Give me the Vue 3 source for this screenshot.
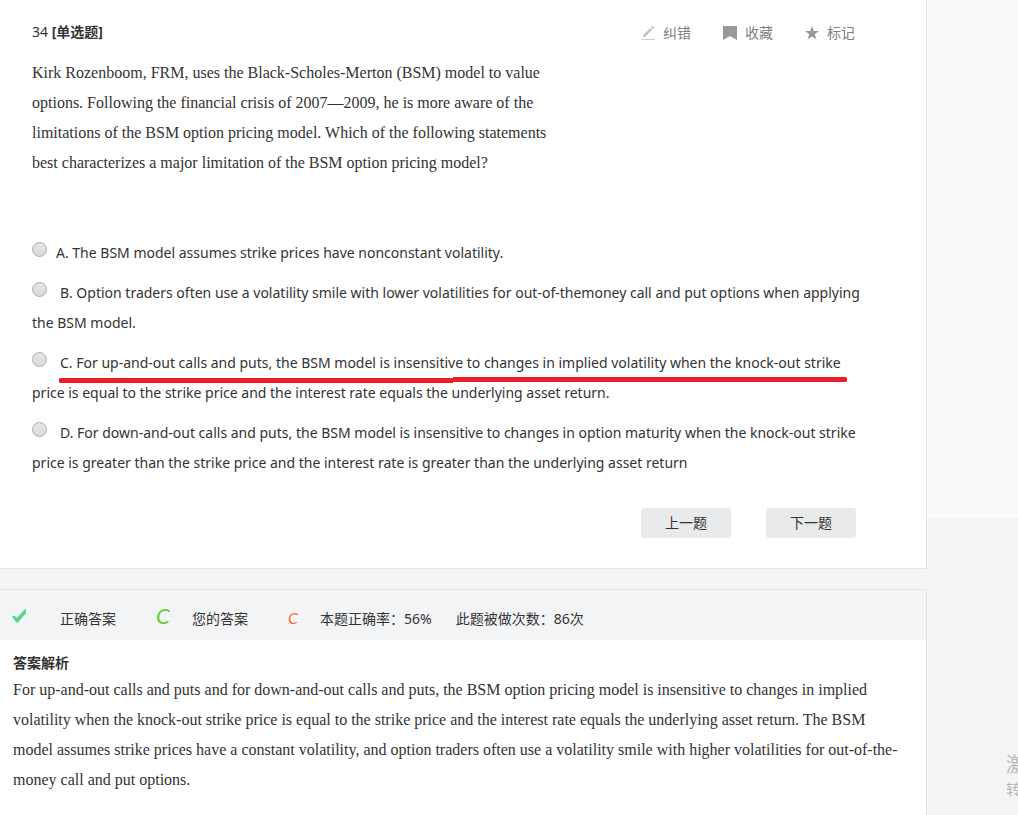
<script setup>
import { ref } from 'vue'

const picked = ref('')
const options = [
  { key: 'A', lines: ['The BSM model assumes strike prices have nonconstant volatility.'] },
  {
    key: 'B',
    lines: [
      'Option traders often use a volatility smile with lower volatilities for out-of-themoney call and put options when applying',
      'the BSM model.',
    ],
  },
  {
    key: 'C',
    marked: true,
    lines: [
      'For up-and-out calls and puts, the BSM model is insensitive to changes in implied volatility when the knock-out strike',
      'price is equal to the strike price and the interest rate equals the underlying asset return.',
    ],
  },
  {
    key: 'D',
    lines: [
      'For down-and-out calls and puts, the BSM model is insensitive to changes in option maturity when the knock-out strike',
      'price is greater than the strike price and the interest rate is greater than the underlying asset return',
    ],
  },
]
const questionLines = [
  'Kirk Rozenboom, FRM, uses the Black-Scholes-Merton (BSM) model to value',
  'options. Following the financial crisis of 2007—2009, he is more aware of the',
  'limitations of the BSM option pricing model. Which of the following statements',
  'best characterizes a major limitation of the BSM option pricing model?',
]
const analysisLines = [
  'For up-and-out calls and puts and for down-and-out calls and puts, the BSM option pricing model is insensitive to changes in implied',
  'volatility when the knock-out strike price is equal to the strike price and the interest rate equals the underlying asset return. The BSM',
  'model assumes strike prices have a constant volatility, and option traders often use a volatility smile with higher volatilities for out-of-the-',
  'money call and put options.',
]
</script>

<template>
  <div class="page">
    <main class="main">
      <section class="panel question">
        <header class="head">
          <h1 class="title">34 <b>[单选题]</b></h1>
          <div class="actions">
            <button type="button" class="action">
              <svg width="14" height="14" viewBox="0 0 14 14" aria-hidden="true">
                <path d="M1.6 11.6 2.6 8.8 9.3 2 11.2 3.8 4.5 10.5z M10 1.4 11.4 0 13.4 1.8 11.9 3.2z" fill="#c0c0c0" />
                <path d="M0 13.5h14" stroke="#cfcfcf" />
              </svg>
              纠错
            </button>
            <button type="button" class="action">
              <svg width="14" height="14" viewBox="0 0 14 14" aria-hidden="true">
                <path d="M0 0h14v14l-7-4-7 4z" fill="#999" />
              </svg>
              收藏
            </button>
            <button type="button" class="action">
              <svg width="14" height="14" viewBox="0 0 14 14" aria-hidden="true">
                <path d="M7 0 8.7 5H14L9.8 8.3 11.4 13.5 7 10.4 2.6 13.5 4.2 8.3 0 5h5.3z" fill="#999" />
              </svg>
              标记
            </button>
          </div>
        </header>

        <p class="serif stem">
          <span v-for="line in questionLines" :key="line" class="line">{{ line }}</span>
        </p>

        <div class="options" role="radiogroup" aria-label="选项">
          <label v-for="o in options" :key="o.key" class="option" :class="{ wide: o.lines.length > 1 }">
            <input v-model="picked" type="radio" name="answer" :value="o.key" class="radio" />
            <span>{{ o.key }}. {{ o.lines[0] }}</span>
            <span v-if="o.lines[1]" class="line">{{ o.lines[1] }}</span>
            <svg v-if="o.marked" class="stroke" width="788" height="6" viewBox="0 0 788 6" aria-hidden="true">
              <path d="M1 1H394V0H787L788 1V4L787 5H394V6H1L0 5V2z" fill="#ed1c24" />
            </svg>
          </label>
        </div>

        <div class="nav">
          <button type="button" class="nav-btn">上一题</button>
          <button type="button" class="nav-btn">下一题</button>
        </div>
      </section>

      <section class="panel result">
        <div class="stats">
          <svg class="tick" width="14" height="14" viewBox="0 0 14 14" aria-hidden="true">
            <path d="M0 8 2 6.5 5 8.8 12 1 14 0V4L6 13.5 4.5 13.5z" fill="#57d68b" />
          </svg>
          <span class="right-label">正确答案</span>
          <span class="letter right">C</span>
          <span class="your-label">您的答案</span>
          <span class="letter yours">C</span>
          <span class="rate">本题正确率：56%</span>
          <span>此题被做次数：86次</span>
        </div>
        <div class="analysis">
          <h2 class="analysis-title">答案解析</h2>
          <p class="serif">
            <span v-for="line in analysisLines" :key="line" class="line">{{ line }}</span>
          </p>
        </div>
      </section>
    </main>

    <aside class="side">
      <div class="side-card"></div>
      <div class="watermark">
        <span class="wm-big">激活</span>
        <span class="wm-small">转到</span>
      </div>
    </aside>
  </div>
</template>

<style>
body {
  margin: 0;
  background: #f4f4f4;
}
</style>

<style scoped>
.page {
  display: flex;
  height: 100vh;
  overflow: hidden;
  color: #333;
  font: 14px/30px 'Noto Sans', 'Noto Sans CJK SC', sans-serif;
}
.main {
  flex: 1;
  min-width: 0;
  display: flex;
  flex-direction: column;
  gap: 20px;
}
.panel {
  background: #fff;
  border: solid #e4e4e4;
  border-width: 0 1px 1px 0;
}
.question {
  padding: 17px 30px 30px 32px;
}
.head {
  display: flex;
  justify-content: space-between;
  padding-right: 41px;
  margin-bottom: 9px;
}
.title {
  margin: 0;
  font-size: 14px;
  font-weight: 400;
}
.actions {
  display: flex;
  gap: 32px;
}
button {
  font: inherit;
  border: 0;
  cursor: pointer;
}
.action {
  display: flex;
  align-items: center;
  gap: 8px;
  padding: 0;
  height: 32px;
  color: #808080;
  background: none;
}
p {
  margin: 0;
}
.serif {
  font-family: 'Liberation Serif', 'Noto Sans CJK SC', serif;
  font-size: 16px;
}
.line {
  display: block;
  white-space: nowrap;
}
.options {
  display: flex;
  flex-direction: column;
  gap: 10px;
  margin-top: 60px;
}
.option {
  position: relative;
  display: block;
  white-space: nowrap;
}
.radio {
  appearance: none;
  box-sizing: border-box;
  width: 15px;
  height: 15px;
  margin: 0 9px 0 0;
  vertical-align: 1px;
  border: 1px solid #adadad;
  border-radius: 50%;
  background: linear-gradient(#e6e6e6, #dadada);
}
.radio:checked {
  background: radial-gradient(#555 30%, #ddd 35%);
}
.wide .radio {
  margin-right: 13px;
}
.stroke {
  position: absolute;
  left: 27px;
  top: 29px;
}
.nav {
  display: flex;
  justify-content: flex-end;
  gap: 35px;
  padding-right: 40px;
  margin-top: 30px;
}
.nav-btn {
  width: 90px;
  height: 30px;
  padding: 0;
  color: #333;
  background: #e8eaeb;
  border-radius: 3px;
}
.result {
  flex: 1;
  border-width: 1px 1px 0 0;
}
.stats {
  display: flex;
  align-items: baseline;
  height: 50px;
  padding: 16px 0 0 12px;
  box-sizing: border-box;
  background: #f3f4f6;
  line-height: 20px;
  white-space: nowrap;
}
.tick {
  align-self: flex-start;
  margin-top: 3px;
}
.right-label {
  margin: 0 40px 0 34px;
}
.your-label {
  margin-right: 40px;
}
.letter {
  font-family: Lato, 'Noto Sans', sans-serif;
  font-style: italic;
}
.right {
  width: 36px;
  font-size: 22px;
  color: #6c3;
}
.yours {
  width: 32px;
  font-size: 16px;
  color: #ff6830;
}
.rate {
  margin-right: 24px;
}
.analysis {
  padding: 11px 13px;
}
.analysis-title {
  margin: 0;
  font-size: 14px;
  line-height: 24px;
}
.side {
  position: relative;
  flex: 0 0 91px;
}
.side-card {
  height: 518px;
  background: #f9fafc;
}
.watermark {
  position: absolute;
  right: 0;
  bottom: 15px;
  width: 12px;
  overflow: hidden;
  white-space: nowrap;
  color: #b8b8b8;
}
.wm-big,
.wm-small {
  display: block;
}
.wm-big {
  font-size: 20px;
  line-height: 26px;
}
.wm-small {
  font-size: 15px;
  line-height: 22px;
}
</style>
